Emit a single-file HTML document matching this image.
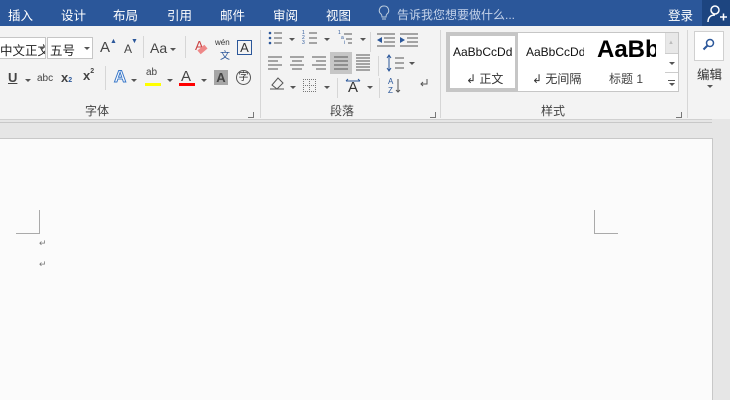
<!DOCTYPE html>
<html><head><meta charset="utf-8"><style>
*{margin:0;padding:0;box-sizing:border-box}
body{width:730px;height:400px;overflow:hidden;background:#e6e6e6;font-family:"Liberation Sans","Noto Sans CJK SC",sans-serif;position:relative}
.a{position:absolute}
.t{color:#fff;font-size:12.5px;top:5px}
.ic{position:absolute;color:#444;font-size:13px}
.dd{position:absolute;width:0;height:0;border-left:3px solid transparent;border-right:3px solid transparent;border-top:3px solid #555}
.sep{position:absolute;width:1px;background:#d6d6d6}
.lbl{position:absolute;top:102px;font-size:12px;color:#444}
.launch{position:absolute;width:6px;height:6px;border-right:1px solid #777;border-bottom:1px solid #777}
</style></head><body>
<div class="a" style="left:0;top:0;width:730px;height:26px;background:#2b579a"></div>
<div class="a t" style="left:8px">插入</div>
<div class="a t" style="left:61px">设计</div>
<div class="a t" style="left:113px">布局</div>
<div class="a t" style="left:167px">引用</div>
<div class="a t" style="left:220px">邮件</div>
<div class="a t" style="left:273px">审阅</div>
<div class="a t" style="left:326px">视图</div>
<svg class="a" style="left:378px;top:5px" width="12" height="16"><path d="M6 1a4.5 4.5 0 0 0-3 8c1 1 1 2 1 3h4c0-1 0-2 1-3a4.5 4.5 0 0 0-3-8zM4 14h4" stroke="#bcd" fill="none"/></svg>
<div class="a" style="left:397px;top:6px;font-size:12px;color:#c5d3ea">告诉我您想要做什么...</div>
<div class="a t" style="left:668px">登录</div>
<div class="a" style="left:702px;top:0;width:28px;height:26px;background:#1d4580"></div>
<svg class="a" style="left:706px;top:3px" width="24" height="20"><circle cx="9" cy="7" r="4" stroke="#fff" fill="none" stroke-width="1.5"/><path d="M2 19c0-5 3-7 7-7M14 14h7M17.5 10.5v7" stroke="#fff" fill="none" stroke-width="1.5"/></svg>

<div class="a" style="left:0;top:26px;width:730px;height:93px;background:#f3f3f3"></div>
<div class="a" style="left:0;top:119px;width:712px;height:1px;background:#d0d0d0"></div>
<div class="a" style="left:0;top:122px;width:712px;height:1px;background:#c8c8c8"></div>

<!-- font group -->
<div class="a" style="left:-1px;top:37px;width:47px;height:22px;background:#fff;border:1px solid #c6c6c6;font-size:12.5px;padding:2px 0 0 0;color:#222;overflow:hidden;white-space:nowrap">中文正文</div>
<div class="dd" style="left:39px;top:47px"></div>
<div class="a" style="left:47px;top:37px;width:46px;height:22px;background:#fff;border:1px solid #c6c6c6;font-size:12.5px;padding:2px 0 0 2px;color:#222">五号</div>
<div class="dd" style="left:84px;top:47px"></div>
<div class="ic" style="left:100px;top:39px;font-size:15px">A</div><div class="a" style="left:110px;top:38px;font-size:7px;color:#2b579a">▲</div>
<div class="ic" style="left:124px;top:42px;font-size:12px">A</div><div class="a" style="left:131px;top:38px;font-size:7px;color:#2b579a">▼</div>
<div class="sep" style="left:143px;top:36px;height:22px"></div>
<div class="ic" style="left:150px;top:40px;font-size:14px">Aa</div><div class="dd" style="left:170px;top:48px"></div>
<div class="sep" style="left:185px;top:36px;height:22px"></div>
<div class="ic" style="left:195px;top:38px;font-size:13px;color:#c44">A</div><div class="a" style="left:198px;top:47px;width:9px;height:5px;background:#e88;transform:rotate(-40deg)"></div>
<div class="ic" style="left:215px;top:38px;font-size:8px;color:#333">wén</div><div class="ic" style="left:220px;top:47px;font-size:10px;color:#2b579a">文</div>
<div class="a" style="left:237px;top:40px;width:15px;height:15px;border:1px solid #2b579a;font-size:13px;color:#333;text-align:center;line-height:14px">A</div>

<div class="ic" style="left:8px;top:70px;font-size:13px;font-weight:bold;text-decoration:underline">U</div><div class="dd" style="left:25px;top:79px"></div>
<div class="ic" style="left:37px;top:73px;font-size:10px">abc</div>
<div class="ic" style="left:61px;top:70px;font-size:13px;font-weight:bold">x<span style="font-size:7px;color:#2b579a">2</span></div>
<div class="ic" style="left:83px;top:68px;font-size:13px;font-weight:bold">x<span style="font-size:7px;vertical-align:top">2</span></div>
<div class="sep" style="left:105px;top:66px;height:24px"></div>
<div class="ic" style="left:114px;top:67px;font-size:17px;color:#fff;-webkit-text-stroke:1px #3a78c9;font-weight:bold">A</div><div class="dd" style="left:131px;top:79px"></div>
<div class="ic" style="left:146px;top:67px;font-size:10px">ab</div><div class="a" style="left:145px;top:83px;width:16px;height:3px;background:#ff0"></div><div class="dd" style="left:167px;top:79px"></div>
<div class="ic" style="left:181px;top:68px;font-size:15px">A</div><div class="a" style="left:179px;top:83px;width:16px;height:3px;background:#f00"></div><div class="dd" style="left:201px;top:79px"></div>
<div class="a" style="left:214px;top:70px;width:14px;height:15px;background:#a6a6a6;font-size:13px;font-weight:bold;color:#444;text-align:center">A</div>
<div class="a" style="left:236px;top:70px;width:15px;height:15px;border:1px solid #555;border-radius:50%;font-size:10px;color:#333;text-align:center;line-height:13px">字</div>
<div class="lbl" style="left:85px">字体</div>
<div class="launch" style="left:248px;top:112px"></div>
<div class="sep" style="left:260px;top:30px;height:88px"></div>

<!-- paragraph -->
<svg class="a" style="left:266px;top:29px" width="180" height="70">
<g fill="#2b579a"><circle cx="4" cy="4" r="1.3"/><circle cx="4" cy="9" r="1.3"/><circle cx="4" cy="14" r="1.3"/></g>
<g stroke="#555"><path d="M8 4h8M8 9h8M8 14h8M43 4h8M43 9h8M43 14h8M78 5h8M80 10h6M82 14h4"/></g>
<g fill="#2b579a" font-size="5" font-family="Liberation Sans"><text x="36" y="5">1</text><text x="36" y="10">2</text><text x="36" y="15">3</text><text x="72" y="5">1</text><text x="75" y="10">a</text><text x="78" y="15">i</text></g>
<g stroke="#555"><path d="M111 5h18M118 9h11M118 13h11M111 17h18M134 5h18M141 9h11M141 13h11M134 17h18"/></g>
<path d="M111 11l5-3v6zM139 11l-5-3v6z" fill="#2b579a"/>
<g stroke="#555"><path d="M2 28h14M2 32h10M2 36h14M2 40h10M24 28h14M26 32h10M24 36h14M26 40h10M46 28h14M50 32h10M46 36h14M50 40h10"/></g>
<rect x="64" y="23" width="22" height="22" fill="#c6c6c6"/>
<g stroke="#555"><path d="M68 28h14M68 32h14M68 36h14M68 40h14M90 26h14M90 29h14M90 32h14M90 35h14M90 38h14M90 41h14"/></g>
<path d="M123 27v14M121 29l2-3 2 3M121 39l2 3 2-3" stroke="#2b579a" fill="none"/>
<g stroke="#555"><path d="M129 29h9M129 34h9M129 39h9"/></g>
<path d="M4 60h14M6 56l6-7 5 5-6 6z" stroke="#555" fill="none"/>
<g fill="#777"><rect x="37" y="50" width="1" height="1"/><rect x="39" y="50" width="1" height="1"/><rect x="41" y="50" width="1" height="1"/><rect x="43" y="50" width="1" height="1"/><rect x="45" y="50" width="1" height="1"/><rect x="47" y="50" width="1" height="1"/><rect x="49" y="50" width="1" height="1"/>
<rect x="37" y="62" width="1" height="1"/><rect x="39" y="62" width="1" height="1"/><rect x="41" y="62" width="1" height="1"/><rect x="43" y="62" width="1" height="1"/><rect x="45" y="62" width="1" height="1"/><rect x="47" y="62" width="1" height="1"/><rect x="49" y="62" width="1" height="1"/>
<rect x="37" y="56" width="1" height="1"/><rect x="39" y="56" width="1" height="1"/><rect x="41" y="56" width="1" height="1"/><rect x="45" y="56" width="1" height="1"/><rect x="47" y="56" width="1" height="1"/><rect x="49" y="56" width="1" height="1"/>
<rect x="37" y="52" width="1" height="1"/><rect x="37" y="54" width="1" height="1"/><rect x="37" y="58" width="1" height="1"/><rect x="37" y="60" width="1" height="1"/>
<rect x="43" y="52" width="1" height="1"/><rect x="43" y="54" width="1" height="1"/><rect x="43" y="56" width="1" height="1"/><rect x="43" y="58" width="1" height="1"/><rect x="43" y="60" width="1" height="1"/>
<rect x="49" y="52" width="1" height="1"/><rect x="49" y="54" width="1" height="1"/><rect x="49" y="58" width="1" height="1"/><rect x="49" y="60" width="1" height="1"/></g>
<text x="82" y="63" font-size="15" font-family="Liberation Sans" fill="#333">A</text>
<path d="M80 52h14M80 52l2-2M94 52l-2-2" stroke="#2b579a" fill="none"/>
<text x="122" y="55" font-size="8" fill="#2b579a" font-family="Liberation Sans">A</text>
<text x="122" y="64" font-size="8" fill="#2b579a" font-family="Liberation Sans">Z</text>
<path d="M132 50v13M130 61l2 2 2-2" stroke="#555" fill="none"/>
<path d="M161 50v5h-6M157 53l-2 2 2 2" stroke="#555" fill="none"/>
</svg>
<div class="dd" style="left:289px;top:38px"></div><div class="dd" style="left:324px;top:38px"></div><div class="dd" style="left:360px;top:38px"></div>
<div class="dd" style="left:409px;top:62px"></div>
<div class="dd" style="left:290px;top:86px"></div><div class="dd" style="left:324px;top:86px"></div><div class="dd" style="left:367px;top:86px"></div>
<div class="sep" style="left:370px;top:32px;height:20px"></div>
<div class="sep" style="left:378px;top:56px;height:20px"></div>
<div class="sep" style="left:337px;top:78px;height:20px"></div>
<div class="sep" style="left:379px;top:78px;height:20px"></div>
<div class="lbl" style="left:330px">段落</div>
<div class="launch" style="left:430px;top:112px"></div>
<div class="sep" style="left:440px;top:30px;height:88px"></div>

<!-- styles -->
<div class="a" style="left:446px;top:32px;width:233px;height:60px;background:#fff;border:1px solid #c6c6c6"></div>
<div class="a" style="left:447px;top:33px;width:71px;height:58px;border:3px solid #c6c6c6"></div>
<div class="a" style="left:453px;top:45px;font-size:12px;color:#111;width:60px;overflow:hidden;white-space:nowrap">AaBbCcDd</div>
<div class="a" style="left:466px;top:70px;font-size:12px;color:#333">↲ 正文</div>
<div class="a" style="left:526px;top:45px;font-size:12px;color:#111;width:58px;overflow:hidden;white-space:nowrap">AaBbCcDd</div>
<div class="a" style="left:532px;top:70px;font-size:12px;color:#333">↲ 无间隔</div>
<div class="a" style="left:597px;top:36px;font-size:24px;font-weight:bold;color:#000;width:59px;overflow:hidden;white-space:nowrap">AaBbC</div>
<div class="a" style="left:609px;top:70px;font-size:12px;color:#444">标题 1</div>
<div class="a" style="left:665px;top:33px;width:13px;height:20px;background:#e8e8e8;border-left:1px solid #ddd"></div>
<div class="a" style="left:665px;top:53px;width:13px;height:1px;background:#ccc"></div>
<div class="a" style="left:665px;top:72px;width:13px;height:1px;background:#ccc"></div>
<div class="a" style="left:668px;top:40px;font-size:6px;color:#bbb">▲</div>
<div class="dd" style="left:669px;top:62px"></div>
<div class="a" style="left:668px;top:80px;width:7px;height:1px;background:#555"></div><div class="dd" style="left:669px;top:83px"></div>
<div class="lbl" style="left:541px">样式</div>
<div class="launch" style="left:676px;top:112px"></div>
<div class="sep" style="left:687px;top:30px;height:88px"></div>
<div class="a" style="left:694px;top:31px;width:30px;height:30px;background:#fff;border:1px solid #d0d0d0"></div>
<svg class="a" style="left:700px;top:36px" width="18" height="18"><circle cx="10" cy="7" r="3.5" stroke="#2b579a" stroke-width="1.5" fill="none"/><path d="M7.5 9.5l-4 4" stroke="#2b579a" stroke-width="2"/></svg>
<div class="a" style="left:697px;top:64px;font-size:12.5px;color:#333">编辑</div>
<div class="dd" style="left:707px;top:85px"></div>
<div class="a" style="left:712px;top:119px;width:18px;height:281px;background:#e6e6e6"></div>

<!-- document -->
<div class="a" style="left:0;top:138px;width:713px;height:262px;background:#fbfbfb;border-top:1px solid #c8c8c8;border-right:1px solid #c8c8c8"></div>
<div class="a" style="left:39px;top:210px;width:1px;height:24px;background:#aaa"></div>
<div class="a" style="left:16px;top:233px;width:24px;height:1px;background:#aaa"></div>
<div class="a" style="left:594px;top:210px;width:1px;height:24px;background:#aaa"></div>
<div class="a" style="left:594px;top:233px;width:24px;height:1px;background:#aaa"></div>
<div class="a" style="left:39px;top:238px;font-size:9px;color:#777">↵</div>
<div class="a" style="left:39px;top:259px;font-size:9px;color:#777">↵</div>
</body></html>
